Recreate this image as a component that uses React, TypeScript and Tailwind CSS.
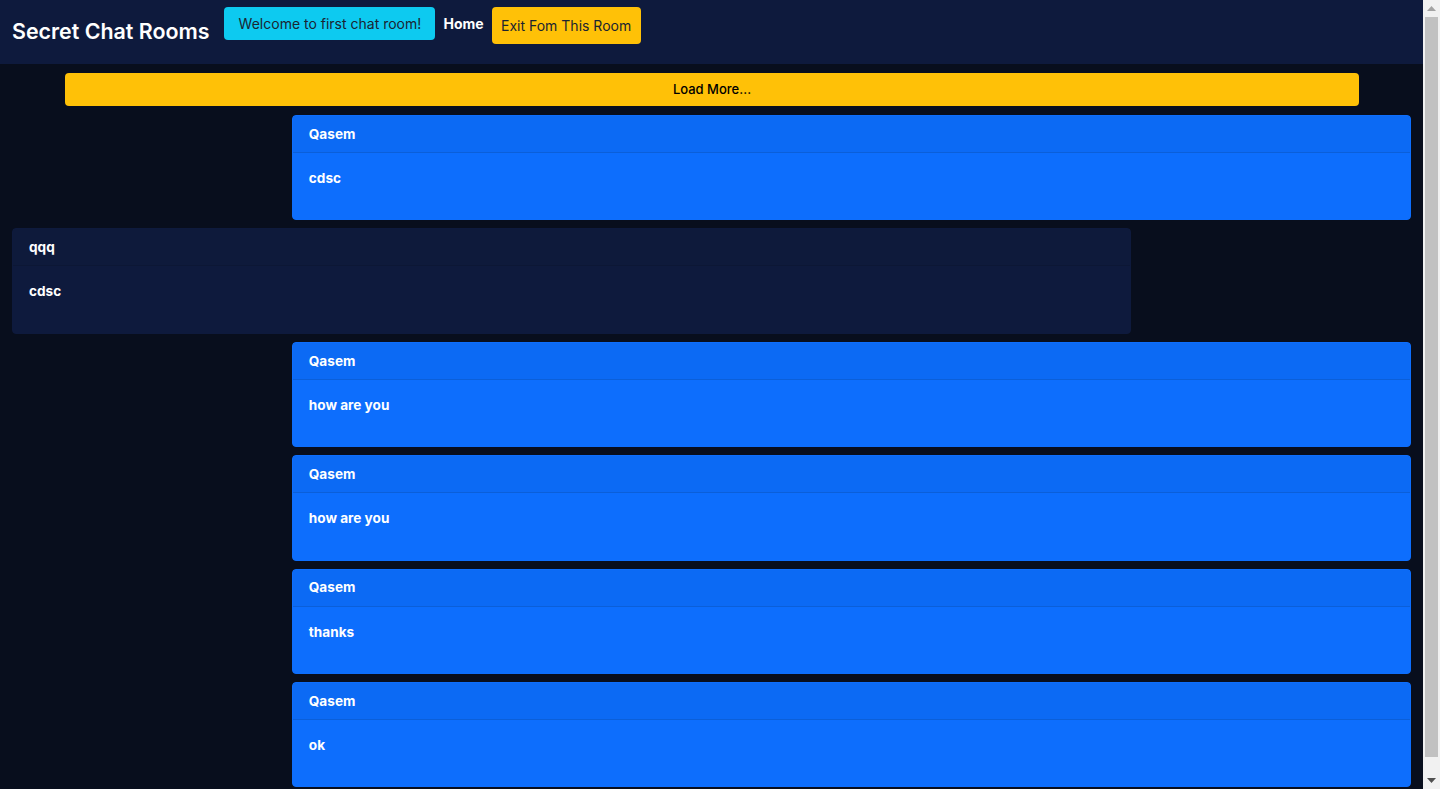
import React from 'react';

type Message = {
  id: number;
  user: string;
  text: string;
  mine: boolean;
};

const messages: Message[] = [
  { id: 1, user: 'Qasem', text: 'cdsc', mine: true },
  { id: 2, user: 'qqq', text: 'cdsc', mine: false },
  { id: 3, user: 'Qasem', text: 'how are you', mine: true },
  { id: 4, user: 'Qasem', text: 'how are you', mine: true },
  { id: 5, user: 'Qasem', text: 'thanks', mine: true },
  { id: 6, user: 'Qasem', text: 'ok', mine: true },
];

const font = { fontFamily: 'Inter, "Open Sans", sans-serif' };

const App = () => {
  return (
    <div className="h-screen flex bg-[#080e1d] text-white overflow-hidden" style={font}>
      <div className="flex-1 min-w-0">
        {/* Navbar */}
        <nav className="flex items-start h-16 bg-[#0e1a3d] px-3">
          <a className="self-center text-[21.4px] font-semibold text-white mr-[15px] leading-none">Secret Chat Rooms</a>
          <div className="flex items-start gap-2 pt-[7px]">
            <span className="h-[33px] w-[211px] flex items-center justify-center rounded bg-[#0dcaf0] text-[14px] text-[#1b2431]">
              Welcome to first chat room!
            </span>
            <a className="h-[33px] flex items-center text-[14px] font-bold text-white">Home</a>
            <button className="h-[37px] w-[149px] flex items-center justify-center rounded bg-[#ffc107] text-[14px] text-[#1b2431]">
              Exit Fom This Room
            </button>
          </div>
        </nav>

        {/* Messages */}
        <div className="px-3 pt-[9px] pb-12">
          <button className="ml-[53px] w-[calc(100%-105px)] h-[33px] flex items-center justify-center rounded bg-[#ffc107] text-[13px] font-medium text-black mb-[9px]">
            Load More...
          </button>
          <div className="flex flex-col gap-2">
            {messages.map((m) => (
              <div
                key={m.id}
                className={`w-4/5 rounded border ${m.mine ? 'ml-auto bg-[#0d6efd] border-[#0d6efd]' : 'bg-[#0e1a3d] border-[#0e1a3d]'}`}
              >
                <div
                  className={`h-[37px] flex items-center px-4 text-[13.6px] font-bold border-b ${m.mine ? 'bg-[#0c6af4] border-[#0b5fd9]' : 'bg-[#0e1a3b] border-[#0c1735]'}`}
                >
                  {m.user}
                </div>
                <div className="px-4 pt-4 h-[66.4px] text-[13.6px] font-bold leading-[18px]">
                  {m.text}
                </div>
              </div>
            ))}
          </div>
        </div>
      </div>

      {/* Scrollbar */}
      <div className="w-[17px] h-full flex flex-col bg-[#f1f1f1]">
        <div className="h-[17px] flex items-center justify-center">
          <svg width="9" height="5" viewBox="0 0 9 5"><path d="M4.5 0L9 5H0z" fill="#a3a3a3" /></svg>
        </div>
        <div className="mx-[2px] h-[740px] bg-[#c1c1c1]" />
        <div className="flex-1" />
        <div className="h-[17px] flex items-center justify-center">
          <svg width="9" height="5" viewBox="0 0 9 5"><path d="M0 0H9L4.5 5z" fill="#505050" /></svg>
        </div>
      </div>
    </div>
  );
};

export default App;
